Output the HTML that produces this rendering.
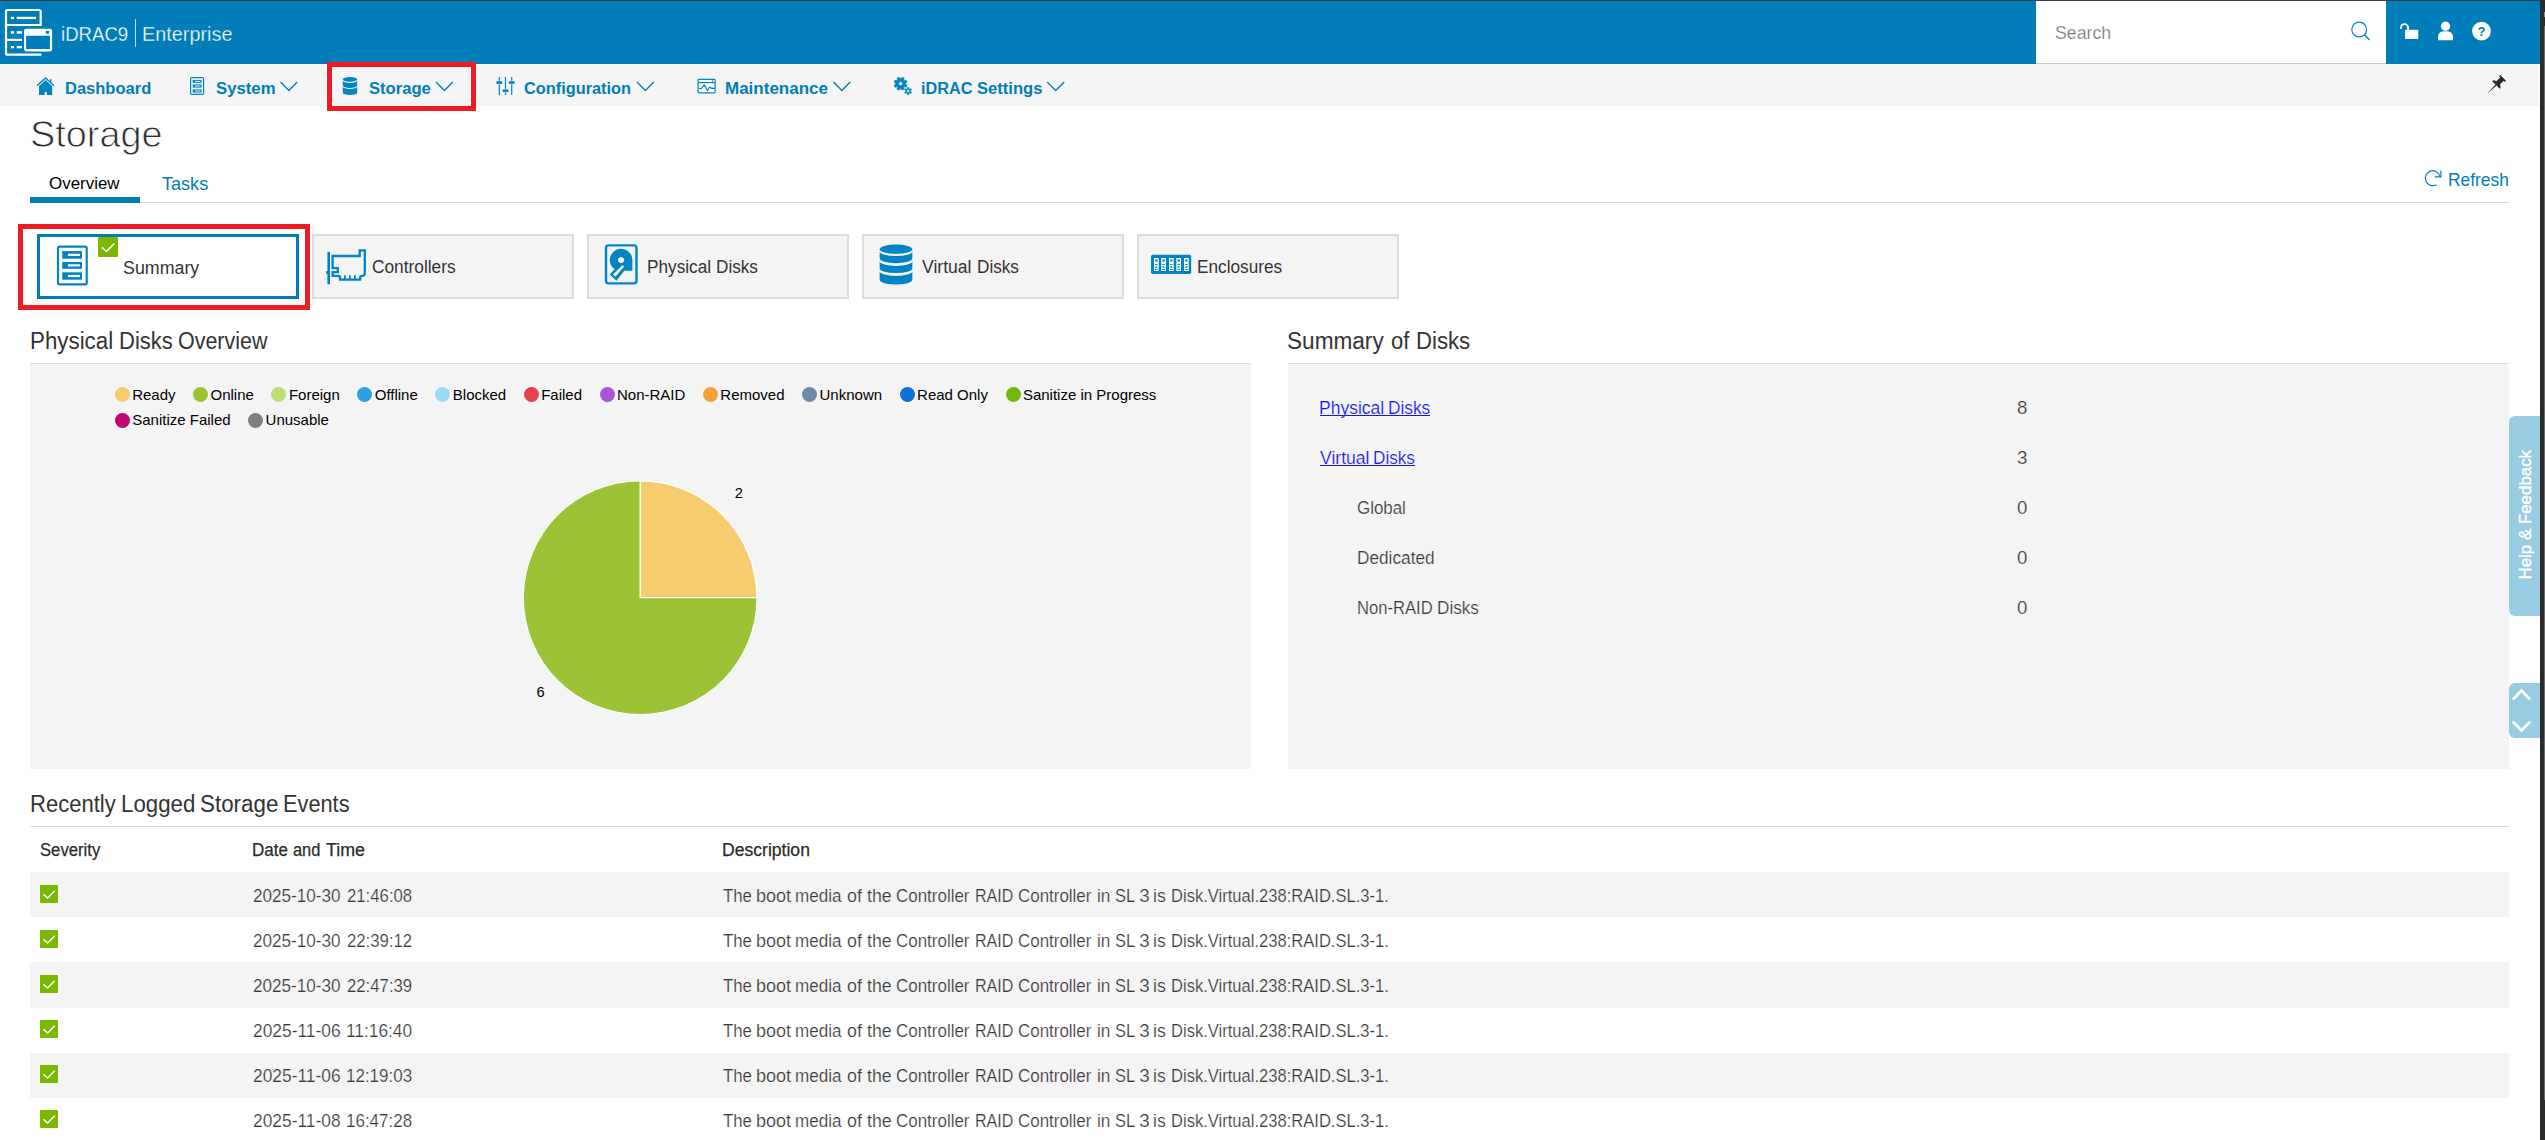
<!DOCTYPE html>
<html lang="en"><head><meta charset="utf-8"><title>iDRAC9 - Storage</title>
<style>
html,body{margin:0;padding:0;}
body{width:2545px;height:1140px;overflow:hidden;background:#fff;position:relative;font-family:"Liberation Sans",sans-serif;}
.b{position:absolute;box-sizing:content-box;display:block;}
.t{position:absolute;white-space:nowrap;transform-origin:0 0;font-family:"Liberation Sans",sans-serif;}
.legend{position:absolute;white-space:nowrap;font-family:"Liberation Sans",sans-serif;font-size:15px;line-height:25.2px;color:#000;}
.legend .li{display:inline-block;margin-right:17.6px;}
.legend .li i{display:inline-block;width:15px;height:15px;border-radius:50%;margin-right:2.4px;vertical-align:-2.9px;}
</style></head>
<body>
<div class="b" style="left:0px;top:0px;width:2545px;height:1px;background:#3c3c3c;"></div>
<div class="b" style="left:0px;top:1px;width:2540px;height:63px;background:#007db8;"></div>
<div class="b" style="left:2036px;top:1px;width:350px;height:62px;background:#ffffff;"></div>
<div class="b" style="left:2036px;top:63px;width:350px;height:1px;background:#c8c8c8;"></div>
<div class="b" style="left:0px;top:64px;width:2539px;height:42px;background:#f5f5f5;"></div>
<div class="b" style="left:2540px;top:0px;width:5px;height:1140px;background:#2b2b2b;"></div>
<div class="b" style="left:2543.5px;top:26px;width:1.5px;height:1074px;background:#6a6a6a;"></div>
<div class="b" style="left:2543.6px;top:12px;width:1.4px;height:5px;background:#8a8a8a;"></div>
<svg class="b" style="left:0px;top:4px;" width="60" height="56" viewBox="0 4 60 56"><g fill="none" stroke="#fff" stroke-width="2.2" stroke-linejoin="round" stroke-linecap="butt">
<path d="M6 25 H40.7 V11.5 a1.5 1.5 0 0 0 -1.5 -1.5 H7.5 a1.5 1.5 0 0 0 -1.5 1.5 V53.2 a1.5 1.5 0 0 0 1.5 1.5 H41.3"/>
<path d="M6 39.9 H22"/>
</g>
<g fill="#fff">
<rect x="10.8" y="16.8" width="3.2" height="2.3"/><rect x="16.7" y="16.8" width="19.4" height="2.3"/>
<rect x="10.8" y="31.2" width="3.2" height="2.5"/><rect x="16.7" y="31.2" width="5.3" height="2.5"/>
<rect x="10.8" y="46" width="3.2" height="2.3"/><rect x="16.7" y="46" width="5.3" height="2.3"/>
<path d="M24.1 30.6 a1.8 1.8 0 0 1 1.8 -1.8 h24.4 a1.8 1.8 0 0 1 1.8 1.8 v19 a1.8 1.8 0 0 1 -1.8 1.8 h-24.4 a1.8 1.8 0 0 1 -1.8 -1.8Z M26.1 35.8 v13.2 h23.8 v-13.2Z M45.9 31 v2.7 h3.2 v-2.7Z" fill-rule="evenodd"/>
</g></svg>
<div class="b" style="left:135px;top:19px;width:1.2px;height:28px;background:rgba(255,255,255,0.75);"></div>
<svg class="b" style="left:2348px;top:18px;" width="26" height="26" viewBox="2348 18 26 26"><circle cx="2359.2" cy="29.5" r="7.4" fill="none" stroke="#0085c3" stroke-width="1.15"/><path d="M2364.4 34.8 L2369.6 40" stroke="#0085c3" stroke-width="1.4" fill="none"/></svg>
<svg class="b" style="left:2396px;top:18px;" width="26" height="26" viewBox="2396 18 26 26"><rect x="2405.1" y="29.8" width="13.2" height="9.2" fill="#fff"/><path d="M2400.9 29 v-1.2 a3.6 3.6 0 0 1 7.2 0 v2.5" fill="none" stroke="#fff" stroke-width="1.8"/></svg>
<svg class="b" style="left:2434px;top:18px;" width="24" height="26" viewBox="2434 18 24 26"><circle cx="2445.5" cy="26.2" r="4.6" fill="#fff"/><path d="M2438 40.2 v-3.4 a5.6 5.6 0 0 1 5.6 -5.6 h3.8 a5.6 5.6 0 0 1 5.6 5.6 v3.4Z" fill="#fff"/></svg>
<svg class="b" style="left:2470px;top:20px;" width="24" height="24" viewBox="2470 20 24 24"><circle cx="2481.5" cy="31.1" r="9.4" fill="#fff"/></svg>
<div class="t" style="left:2477.6px;top:22.9px;font-size:13px;line-height:17px;font-weight:700;color:#007db8">?</div>
<svg class="b" style="left:34px;top:74px;" width="24" height="24" viewBox="34 74 24 24"><path d="M37 85.7 L45.5 77.9 L54 85.7" fill="none" stroke="#0085c3" stroke-width="1.4" stroke-linecap="butt"/><rect x="50.1" y="79" width="1.3" height="3.6" fill="#0085c3"/><path d="M45.5 80.1 L52.2 86.2 V95 H46.8 V92 H44.7 V95 H39 V86.2Z" fill="#0085c3"/></svg>
<svg class="b" style="left:188px;top:75px;" width="20" height="22" viewBox="188 75 20 22"><rect x="190.6" y="77.6" width="13" height="16.8" rx="1.2" fill="none" stroke="#0085c3" stroke-width="1.2"/><rect x="192.7" y="79.9" width="8.9" height="3.0" fill="#0085c3"/><rect x="195" y="80.9" width="5.4" height="1" fill="#e8f3fa"/><rect x="192.7" y="84.4" width="8.9" height="3.2" fill="#0085c3"/><rect x="195" y="85.5" width="5.4" height="1" fill="#e8f3fa"/><rect x="192.7" y="89.4" width="8.9" height="3.2" fill="#0085c3"/><rect x="195" y="90.5" width="5.4" height="1" fill="#e8f3fa"/></svg>
<svg class="b" style="left:340px;top:75px;" width="20" height="22" viewBox="340 75 20 22"><ellipse cx="350" cy="79.35" rx="7.2" ry="2.35" fill="#0085c3"/><path d="M342.8 80.6 A7.2 2.35 0 0 0 357.2 80.6 L357.2 85.55 A7.2 2.35 0 0 1 342.8 85.55Z" fill="#0085c3"/><path d="M342.8 86.6 A7.2 2.35 0 0 0 357.2 86.6 L357.2 92.65 A7.2 2.35 0 0 1 342.8 92.65Z" fill="#0085c3"/></svg>
<svg class="b" style="left:494px;top:75px;" width="24" height="22" viewBox="494 75 24 22"><rect x="498.7" y="77" width="1.2" height="18" fill="#0085c3"/><rect x="496.0" y="80.7" width="6.6" height="3.7" fill="#f5f5f5"/><rect x="496.40000000000003" y="81.2" width="5.8" height="2.7" fill="#0085c3"/><rect x="504.9" y="77" width="1.2" height="18" fill="#0085c3"/><rect x="502.2" y="88.9" width="6.6" height="3.7" fill="#f5f5f5"/><rect x="502.6" y="89.4" width="5.8" height="2.7" fill="#0085c3"/><rect x="511.09999999999997" y="77" width="1.2" height="18" fill="#0085c3"/><rect x="508.4" y="80.7" width="6.6" height="3.7" fill="#f5f5f5"/><rect x="508.8" y="81.2" width="5.8" height="2.7" fill="#0085c3"/></svg>
<svg class="b" style="left:695px;top:76px;" width="24" height="20" viewBox="695 76 24 20"><rect x="698.1" y="79.4" width="17" height="13.5" rx="0.8" fill="#fff" stroke="#0085c3" stroke-width="1.2"/><rect x="712.2" y="80" width="0.7" height="2.2" fill="#0085c3"/><path d="M698.1 82.6 H715.1" stroke="#0085c3" stroke-width="1.2"/><path d="M698.6 88.5 H701.6 L704.3 84.9 L707.4 90.5 L709.8 87.1 L711.8 88.4 H714.8" fill="none" stroke="#0085c3" stroke-width="1.2" stroke-linejoin="round"/></svg>
<svg class="b" style="left:890px;top:74px;" width="26" height="24" viewBox="890 74 26 24"><path d="M905.18 84.17 L906.98 84.97 L906.00 87.31 L904.17 86.60 L903.50 87.27 L904.21 89.10 L901.87 90.08 L901.07 88.28 L900.13 88.28 L899.33 90.08 L896.99 89.10 L897.70 87.27 L897.03 86.60 L895.20 87.31 L894.22 84.97 L896.02 84.17 L896.02 83.23 L894.22 82.43 L895.20 80.09 L897.03 80.80 L897.70 80.13 L896.99 78.30 L899.33 77.32 L900.13 79.12 L901.07 79.12 L901.87 77.32 L904.21 78.30 L903.50 80.13 L904.17 80.80 L906.00 80.09 L906.98 82.43 L905.18 83.23Z M898.50 83.70 a2.1 2.1 0 1 0 4.2 0 a2.1 2.1 0 1 0 -4.2 0Z" fill="#0085c3" fill-rule="evenodd" stroke="#0085c3" stroke-width="0.8" stroke-linejoin="round"/><path d="M908.91 93.31 L908.91 94.66 L907.29 94.66 L907.29 93.31 L906.55 92.88 L905.38 93.55 L904.57 92.16 L905.74 91.48 L905.74 90.62 L904.57 89.94 L905.38 88.55 L906.55 89.22 L907.29 88.79 L907.29 87.44 L908.91 87.44 L908.91 88.79 L909.65 89.22 L910.82 88.55 L911.63 89.94 L910.46 90.62 L910.46 91.48 L911.63 92.16 L910.82 93.55 L909.65 92.88Z M906.75 91.05 a1.35 1.35 0 1 0 2.7 0 a1.35 1.35 0 1 0 -2.7 0Z" fill="#0085c3" fill-rule="evenodd" stroke="#0085c3" stroke-width="0.5" stroke-linejoin="round"/></svg>
<svg class="b" style="left:278px;top:80px;" width="22" height="14" viewBox="278 80 22 14"><path d="M280.6 82 L288.9 90.5 L297.2 82" fill="none" stroke="#007db8" stroke-width="1.3"/></svg>
<svg class="b" style="left:434px;top:80px;" width="22" height="14" viewBox="434 80 22 14"><path d="M436 82 L444.4 90.5 L452.8 82" fill="none" stroke="#007db8" stroke-width="1.3"/></svg>
<svg class="b" style="left:635px;top:80px;" width="22" height="14" viewBox="635 80 22 14"><path d="M637 82 L645.4 90.5 L653.8 82" fill="none" stroke="#007db8" stroke-width="1.3"/></svg>
<svg class="b" style="left:831px;top:80px;" width="22" height="14" viewBox="831 80 22 14"><path d="M833.5 82 L841.85 90.5 L850.2 82" fill="none" stroke="#007db8" stroke-width="1.3"/></svg>
<svg class="b" style="left:1045px;top:80px;" width="23" height="14" viewBox="1045 80 23 14"><path d="M1047.2 82 L1055.7 90.5 L1064.2 82" fill="none" stroke="#007db8" stroke-width="1.3"/></svg>
<svg class="b" style="left:2484px;top:72px;" width="26" height="26" viewBox="2484 72 26 26"><path d="M2487.00 94.00 L2496.51 85.52 L2499.74 88.76 L2500.64 87.86 L2500.08 84.30 L2503.68 80.70 L2504.86 81.88 L2506.06 80.68 L2500.32 74.94 L2499.12 76.14 L2500.30 77.32 L2496.70 80.92 L2493.14 80.36 L2492.24 81.26 L2495.48 84.49Z" fill="#2b2b2b"/></svg>
<div class="b" style="left:327px;top:62px;width:139px;height:39px;background:transparent;border:5px solid #ed1c24;"></div>
<div class="b" style="left:18px;top:224px;width:282px;height:76px;background:transparent;border:5px solid #ed1c24;"></div>
<div class="b" style="left:30px;top:197px;width:110px;height:6px;background:#007db8;"></div>
<div class="b" style="left:140px;top:202px;width:2369px;height:1px;background:#dcdcdc;"></div>
<svg class="b" style="left:2422px;top:167px;" width="22" height="22" viewBox="2422 167 22 22"><path d="M2440.1 176.6 A7.5 7.5 0 1 0 2436.5 184.7" fill="none" stroke="#0085c3" stroke-width="1.2"/><path d="M2434.8 176.9 H2440.9 V170.6" fill="none" stroke="#0085c3" stroke-width="1.2"/></svg>
<div class="b" style="left:37px;top:234px;width:256px;height:59px;background:#ffffff;border:3px solid #007db8;"></div>
<div class="b" style="left:312px;top:234px;width:258px;height:61px;background:#f4f4f4;border:2px solid #dcdcdc;"></div>
<div class="b" style="left:587px;top:234px;width:258px;height:61px;background:#f4f4f4;border:2px solid #dcdcdc;"></div>
<div class="b" style="left:862px;top:234px;width:258px;height:61px;background:#f4f4f4;border:2px solid #dcdcdc;"></div>
<div class="b" style="left:1137px;top:234px;width:258px;height:61px;background:#f4f4f4;border:2px solid #dcdcdc;"></div>
<svg class="b" style="left:54px;top:243px;" width="36" height="45" viewBox="54 243 36 45"><rect x="58" y="246.7" width="28.7" height="37.6" rx="1.6" fill="#fff" stroke="#0085c3" stroke-width="2.2"/><rect x="62.2" y="251.1" width="19.8" height="7.6" fill="#0085c3"/><rect x="67.9" y="253.8" width="12.1" height="2.2" fill="#fff"/><rect x="62.2" y="262" width="19.8" height="6.8" fill="#0085c3"/><rect x="67.9" y="264.29999999999995" width="12.1" height="2.2" fill="#fff"/><rect x="62.2" y="272.3" width="19.8" height="7.4" fill="#0085c3"/><rect x="67.9" y="274.9" width="12.1" height="2.2" fill="#fff"/></svg>
<svg class="b" style="left:98px;top:237px;" width="20" height="20" viewBox="98 237 20 20"><rect x="98" y="237" width="20" height="20" rx="1.2" fill="#7ab800"/><path d="M101.9 247.4 L106.5 251.4 L114.4 243.5" fill="none" stroke="#fff" stroke-width="1.6"/></svg>
<svg class="b" style="left:324px;top:247px;" width="44" height="40" viewBox="324 247 44 40"><rect x="327.4" y="252" width="2.6" height="32.3" fill="#0085c3"/><rect x="326.2" y="271" width="2" height="3" fill="#0085c3"/>
<path d="M332.6 256 H359.7 V250.4 H364.8 V273.6 a2.2 2.2 0 0 1 -2.2 2.2 H361.6 a1.4 1.4 0 0 0 -1.4 1.4 V279.7 H340 V277.4 a1.6 1.6 0 0 0 -1.6 -1.6 H332.6 V272.2 H337.8 V268.1 H332.6Z" fill="none" stroke="#0085c3" stroke-width="2.3" stroke-linejoin="miter"/>
<path d="M344.9 275.2 V279.7 M349.9 275.2 V279.7 M354.9 275.2 V279.7" stroke="#0085c3" stroke-width="1.8"/></svg>
<svg class="b" style="left:603px;top:242px;" width="37" height="45" viewBox="603 242 37 45"><rect x="606" y="245.4" width="30.5" height="38" rx="2.6" fill="none" stroke="#0085c3" stroke-width="2.4"/>
<path d="M624.2 270.7 H632.4 V260 A11.3 11.3 0 1 0 614.6 269.3 L609.7 274.4 L616.5 280.7Z M621.1 256.9 a3.1 3.1 0 1 0 0.01 0Z" fill="#0085c3" fill-rule="evenodd"/>
<path d="M612.9 274.5 L622.6 265.1 L624 266.7 L615.4 276.8Z" fill="#f4f4f4"/></svg>
<svg class="b" style="left:877px;top:242px;" width="38" height="45" viewBox="877 242 38 45"><ellipse cx="896" cy="249.2" rx="16.35" ry="4.7" fill="#0085c3"/><path d="M879.65 251.4 A16.35 4.7 0 0 0 912.35 251.4 L912.35 258.5 A16.35 4.7 0 0 1 879.65 258.5Z" fill="#0085c3"/><path d="M879.65 261.3 A16.35 4.7 0 0 0 912.35 261.3 L912.35 268.4 A16.35 4.7 0 0 1 879.65 268.4Z" fill="#0085c3"/><path d="M879.65 271.3 A16.35 4.7 0 0 0 912.35 271.3 L912.35 279.6 A16.35 5.0 0 0 1 879.65 279.6Z" fill="#0085c3"/></svg>
<svg class="b" style="left:1149px;top:252px;" width="44" height="24" viewBox="1149 252 44 24"><rect x="1151" y="254.8" width="40.2" height="19.2" rx="1.8" fill="#0085c3"/><rect x="1154" y="258" width="4.7" height="13" fill="#fff"/><rect x="1155.2" y="259.4" width="2.3" height="2.2" fill="#0085c3"/><rect x="1155" y="264" width="2.7" height="0.9" fill="#0085c3"/><rect x="1155.2" y="266" width="2.3" height="2" fill="#5aa5d4"/><rect x="1155" y="269" width="2.7" height="0.9" fill="#0085c3"/><rect x="1161.2" y="258" width="4.7" height="13" fill="#fff"/><rect x="1162.4" y="259.4" width="2.3" height="2.2" fill="#0085c3"/><rect x="1162.2" y="264" width="2.7" height="0.9" fill="#0085c3"/><rect x="1162.4" y="266" width="2.3" height="2" fill="#5aa5d4"/><rect x="1162.2" y="269" width="2.7" height="0.9" fill="#0085c3"/><rect x="1169" y="258" width="4.7" height="13" fill="#fff"/><rect x="1170.2" y="259.4" width="2.3" height="2.2" fill="#0085c3"/><rect x="1170" y="264" width="2.7" height="0.9" fill="#0085c3"/><rect x="1170.2" y="266" width="2.3" height="2" fill="#5aa5d4"/><rect x="1170" y="269" width="2.7" height="0.9" fill="#0085c3"/><rect x="1176.3" y="258" width="4.7" height="13" fill="#fff"/><rect x="1177.5" y="259.4" width="2.3" height="2.2" fill="#0085c3"/><rect x="1177.3" y="264" width="2.7" height="0.9" fill="#0085c3"/><rect x="1177.5" y="266" width="2.3" height="2" fill="#5aa5d4"/><rect x="1177.3" y="269" width="2.7" height="0.9" fill="#0085c3"/><rect x="1184" y="258" width="4.7" height="13" fill="#fff"/><rect x="1185.2" y="259.4" width="2.3" height="2.2" fill="#0085c3"/><rect x="1185" y="264" width="2.7" height="0.9" fill="#0085c3"/><rect x="1185.2" y="266" width="2.3" height="2" fill="#5aa5d4"/><rect x="1185" y="269" width="2.7" height="0.9" fill="#0085c3"/></svg>
<div class="b" style="left:30px;top:363px;width:1221px;height:1px;background:#dcdcdc;"></div>
<div class="b" style="left:30px;top:364px;width:1221px;height:405px;background:#f4f4f4;"></div>
<div class="b" style="left:1288px;top:363px;width:1221px;height:1px;background:#dcdcdc;"></div>
<div class="b" style="left:1288px;top:364px;width:1221px;height:405px;background:#f4f4f4;"></div>
<svg class="b" style="left:520px;top:477px;" width="242" height="242" viewBox="520 477 242 242"><circle cx="640.2" cy="597.7" r="116.8" fill="#9bc335" stroke="#fff" stroke-width="1"/><path d="M640.2 597.7 V480.9 A116.8 116.8 0 0 1 757 597.7Z" fill="#f5cd6e" stroke="#fff" stroke-width="1.3"/></svg>
<div class="legend" style="left:114.8px;top:381.5px;"><span class="li"><i style="background:#f5cd6e"></i>Ready</span><span class="li"><i style="background:#9bc335"></i>Online</span><span class="li"><i style="background:#bfdc77"></i>Foreign</span><span class="li"><i style="background:#2d9fe3"></i>Offline</span><span class="li"><i style="background:#9adcf5"></i>Blocked</span><span class="li"><i style="background:#e4434e"></i>Failed</span><span class="li"><i style="background:#a855d8"></i>Non-RAID</span><span class="li"><i style="background:#f6a135"></i>Removed</span><span class="li"><i style="background:#6e8ba6"></i>Unknown</span><span class="li"><i style="background:#0b72d6"></i>Read Only</span><span class="li"><i style="background:#76b70f"></i>Sanitize in Progress</span><br><span class="li"><i style="background:#c0076f"></i>Sanitize Failed</span><span class="li"><i style="background:#7f7f7f"></i>Unusable</span></div>
<div class="b" style="left:1320px;top:415.4px;width:110.2px;height:1px;background:#1414f0;"></div>
<div class="b" style="left:1320px;top:465.1px;width:95.4px;height:1px;background:#1414f0;"></div>
<div class="b" style="left:2509px;top:416px;width:31px;height:200px;background:#99cbe3;border-radius:6px 0 0 6px;"></div>
<div class="t" style="left:2460.5px;top:504.5px;width:129px;text-align:center;font-size:16.9px;line-height:20px;color:#fff;transform-origin:50% 50%;transform:rotate(-90deg);-webkit-text-stroke:0.35px #fff;">Help &amp; Feedback</div>
<div class="b" style="left:2509px;top:683px;width:31px;height:55px;background:#99cbe3;border-radius:6px 0 0 6px;"></div>
<svg class="b" style="left:2509px;top:683px;" width="31" height="55" viewBox="2509 683 31 55"><path d="M2512.9 699.5 L2521.5 690.6 L2530.1 699.5 M2512.9 721.6 L2521.5 730.5 L2530.1 721.6" fill="none" stroke="#fff" stroke-width="2.8"/></svg>
<div class="b" style="left:30px;top:826px;width:2479px;height:1px;background:#dcdcdc;"></div>
<div class="b" style="left:30px;top:872px;width:2479px;height:45px;background:#f4f4f4;"></div>
<svg class="b" style="left:40px;top:885px;" width="18" height="18" viewBox="40 885 18 18"><rect x="40" y="885" width="18" height="18" rx="1.08" fill="#7ab800"/><path d="M43.51 894.36 L47.65 897.96 L54.76 890.85" fill="none" stroke="#fff" stroke-width="1.4400000000000002"/></svg>
<svg class="b" style="left:40px;top:930px;" width="18" height="18" viewBox="40 930 18 18"><rect x="40" y="930" width="18" height="18" rx="1.08" fill="#7ab800"/><path d="M43.51 939.36 L47.65 942.96 L54.76 935.85" fill="none" stroke="#fff" stroke-width="1.4400000000000002"/></svg>
<div class="b" style="left:30px;top:962px;width:2479px;height:46px;background:#f4f4f4;"></div>
<svg class="b" style="left:40px;top:975px;" width="18" height="18" viewBox="40 975 18 18"><rect x="40" y="975" width="18" height="18" rx="1.08" fill="#7ab800"/><path d="M43.51 984.36 L47.65 987.96 L54.76 980.85" fill="none" stroke="#fff" stroke-width="1.4400000000000002"/></svg>
<svg class="b" style="left:40px;top:1020px;" width="18" height="18" viewBox="40 1020 18 18"><rect x="40" y="1020" width="18" height="18" rx="1.08" fill="#7ab800"/><path d="M43.51 1029.36 L47.65 1032.96 L54.76 1025.85" fill="none" stroke="#fff" stroke-width="1.4400000000000002"/></svg>
<div class="b" style="left:30px;top:1053px;width:2479px;height:45px;background:#f4f4f4;"></div>
<svg class="b" style="left:40px;top:1065px;" width="18" height="18" viewBox="40 1065 18 18"><rect x="40" y="1065" width="18" height="18" rx="1.08" fill="#7ab800"/><path d="M43.51 1074.36 L47.65 1077.96 L54.76 1070.85" fill="none" stroke="#fff" stroke-width="1.4400000000000002"/></svg>
<svg class="b" style="left:40px;top:1110px;" width="18" height="18" viewBox="40 1110 18 18"><rect x="40" y="1110" width="18" height="18" rx="1.08" fill="#7ab800"/><path d="M43.51 1119.36 L47.65 1122.96 L54.76 1115.85" fill="none" stroke="#fff" stroke-width="1.4400000000000002"/></svg>
<div class="t" style="left:61.27px;top:22.03px;font-size:20px;line-height:24px;font-weight:400;color:#ffffff;transform:scaleX(0.9295);-webkit-text-stroke:0.3px #007db8;">iDRAC9</div>
<div class="t" style="left:142.21px;top:22.03px;font-size:20px;line-height:24px;font-weight:400;color:#ffffff;transform:scaleX(0.9925);-webkit-text-stroke:0.3px #007db8;">Enterprise</div>
<div class="t" style="left:2055.34px;top:22.03px;font-size:18px;line-height:22px;font-weight:400;color:#757575;transform:scaleX(0.9857);-webkit-text-stroke:0.25px #fff;">Search</div>
<div class="t" style="left:64.55px;top:78.03px;font-size:17.4px;line-height:21px;font-weight:700;color:#007db8;transform:scaleX(0.9494);">Dashboard</div>
<div class="t" style="left:216.20px;top:78.03px;font-size:17.4px;line-height:21px;font-weight:700;color:#007db8;transform:scaleX(0.9624);">System</div>
<div class="t" style="left:369.20px;top:78.03px;font-size:17.4px;line-height:21px;font-weight:700;color:#007db8;transform:scaleX(0.9552);">Storage</div>
<div class="t" style="left:524.33px;top:78.03px;font-size:17.4px;line-height:21px;font-weight:700;color:#007db8;transform:scaleX(0.9386);">Configuration</div>
<div class="t" style="left:724.92px;top:78.03px;font-size:17.4px;line-height:21px;font-weight:700;color:#007db8;transform:scaleX(0.9774);">Maintenance</div>
<div class="t" style="left:921.47px;top:78.03px;font-size:17.4px;line-height:21px;font-weight:700;color:#007db8;transform:scaleX(0.9323);">iDRAC</div>
<div class="t" style="left:977.10px;top:78.03px;font-size:17.4px;line-height:21px;font-weight:700;color:#007db8;transform:scaleX(0.9524);">Settings</div>
<div class="t" style="left:29.95px;top:112.02px;font-size:37.3px;line-height:45px;font-weight:400;color:#2e2e2e;transform:scaleX(1.0147);-webkit-text-stroke:0.85px #fff;">Storage</div>
<div class="t" style="left:48.96px;top:173.03px;font-size:17.4px;line-height:21px;font-weight:400;color:#000000;transform:scaleX(0.9737);">Overview</div>
<div class="t" style="left:162.10px;top:173.02px;font-size:18.6px;line-height:22px;font-weight:400;color:#007db8;transform:scaleX(0.9718);">Tasks</div>
<div class="t" style="left:2447.77px;top:169.02px;font-size:18.6px;line-height:22px;font-weight:400;color:#007db8;transform:scaleX(0.9347);">Refresh</div>
<div class="t" style="left:123.41px;top:257.03px;font-size:18.7px;line-height:22px;font-weight:400;color:#333333;transform:scaleX(0.9534);">Summary</div>
<div class="t" style="left:372.15px;top:256.02px;font-size:18.7px;line-height:22px;font-weight:400;color:#333333;transform:scaleX(0.9255);">Controllers</div>
<div class="t" style="left:646.58px;top:256.02px;font-size:18.7px;line-height:22px;font-weight:400;color:#333333;transform:scaleX(0.9209);">Physical</div>
<div class="t" style="left:716.08px;top:256.02px;font-size:18.7px;line-height:22px;font-weight:400;color:#333333;transform:scaleX(0.9180);">Disks</div>
<div class="t" style="left:922.40px;top:256.02px;font-size:18.7px;line-height:22px;font-weight:400;color:#333333;transform:scaleX(0.9402);">Virtual</div>
<div class="t" style="left:976.58px;top:256.02px;font-size:18.7px;line-height:22px;font-weight:400;color:#333333;transform:scaleX(0.9180);">Disks</div>
<div class="t" style="left:1197.13px;top:256.02px;font-size:18.7px;line-height:22px;font-weight:400;color:#333333;transform:scaleX(0.9210);">Enclosures</div>
<div class="t" style="left:30.33px;top:327.03px;font-size:23px;line-height:28px;font-weight:400;color:#333333;transform:scaleX(0.9709);">Physical</div>
<div class="t" style="left:119.04px;top:327.03px;font-size:23px;line-height:28px;font-weight:400;color:#333333;transform:scaleX(0.9570);">Disks</div>
<div class="t" style="left:177.77px;top:327.03px;font-size:23px;line-height:28px;font-weight:400;color:#333333;transform:scaleX(0.9324);">Overview</div>
<div class="t" style="left:1287.42px;top:327.03px;font-size:23px;line-height:28px;font-weight:400;color:#333333;transform:scaleX(0.9826);">Summary</div>
<div class="t" style="left:1390.90px;top:327.03px;font-size:23px;line-height:28px;font-weight:400;color:#333333;transform:scaleX(0.9550);">of</div>
<div class="t" style="left:1415.84px;top:327.03px;font-size:23px;line-height:28px;font-weight:400;color:#333333;transform:scaleX(0.9631);">Disks</div>
<div class="t" style="left:30.04px;top:790.03px;font-size:23px;line-height:28px;font-weight:400;color:#333333;transform:scaleX(0.9570);">Recently</div>
<div class="t" style="left:121.43px;top:790.03px;font-size:23px;line-height:28px;font-weight:400;color:#333333;transform:scaleX(0.9681);">Logged</div>
<div class="t" style="left:199.73px;top:790.03px;font-size:23px;line-height:28px;font-weight:400;color:#333333;transform:scaleX(0.9725);">Storage</div>
<div class="t" style="left:283.05px;top:790.03px;font-size:23px;line-height:28px;font-weight:400;color:#333333;transform:scaleX(0.9460);">Events</div>
<div class="t" style="left:1319.06px;top:397.03px;font-size:18.7px;line-height:22px;font-weight:400;color:#1414f0;transform:scaleX(0.9372);-webkit-text-stroke:0.2px #f4f4f4;">Physical</div>
<div class="t" style="left:1388.28px;top:397.03px;font-size:18.7px;line-height:22px;font-weight:400;color:#1414f0;transform:scaleX(0.9248);-webkit-text-stroke:0.2px #f4f4f4;">Disks</div>
<div class="t" style="left:1320.00px;top:447.02px;font-size:18.7px;line-height:22px;font-weight:400;color:#1414f0;transform:scaleX(0.9402);-webkit-text-stroke:0.2px #f4f4f4;">Virtual</div>
<div class="t" style="left:1373.23px;top:447.02px;font-size:18.7px;line-height:22px;font-weight:400;color:#1414f0;transform:scaleX(0.9180);-webkit-text-stroke:0.2px #f4f4f4;">Disks</div>
<div class="t" style="left:1356.78px;top:497.02px;font-size:18.7px;line-height:22px;font-weight:400;color:#383838;transform:scaleX(0.9042);-webkit-text-stroke:0.22px #f4f4f4;">Global</div>
<div class="t" style="left:1356.58px;top:547.03px;font-size:18.7px;line-height:22px;font-weight:400;color:#383838;transform:scaleX(0.9220);-webkit-text-stroke:0.22px #f4f4f4;">Dedicated</div>
<div class="t" style="left:1356.61px;top:597.03px;font-size:18.7px;line-height:22px;font-weight:400;color:#383838;transform:scaleX(0.8893);-webkit-text-stroke:0.22px #f4f4f4;">Non-RAID</div>
<div class="t" style="left:1436.58px;top:597.03px;font-size:18.7px;line-height:22px;font-weight:400;color:#383838;transform:scaleX(0.9180);-webkit-text-stroke:0.22px #f4f4f4;">Disks</div>
<div class="t" style="left:2016.89px;top:397.03px;font-size:18.7px;line-height:22px;font-weight:400;color:#383838;letter-spacing:0.000px;-webkit-text-stroke:0.22px #f4f4f4;">8</div>
<div class="t" style="left:2016.89px;top:447.03px;font-size:18.7px;line-height:22px;font-weight:400;color:#383838;letter-spacing:0.000px;-webkit-text-stroke:0.22px #f4f4f4;">3</div>
<div class="t" style="left:2016.89px;top:497.03px;font-size:18.7px;line-height:22px;font-weight:400;color:#383838;letter-spacing:0.000px;-webkit-text-stroke:0.22px #f4f4f4;">0</div>
<div class="t" style="left:2016.89px;top:547.03px;font-size:18.7px;line-height:22px;font-weight:400;color:#383838;letter-spacing:0.000px;-webkit-text-stroke:0.22px #f4f4f4;">0</div>
<div class="t" style="left:2016.89px;top:597.03px;font-size:18.7px;line-height:22px;font-weight:400;color:#383838;letter-spacing:0.000px;-webkit-text-stroke:0.22px #f4f4f4;">0</div>
<div class="t" style="left:40.40px;top:839.02px;font-size:18.7px;line-height:22px;font-weight:400;color:#2a2a2a;transform:scaleX(0.8920);-webkit-text-stroke:0.25px #2a2a2a;">Severity</div>
<div class="t" style="left:252.29px;top:839.02px;font-size:18.7px;line-height:22px;font-weight:400;color:#2a2a2a;transform:scaleX(0.9086);-webkit-text-stroke:0.25px #2a2a2a;">Date</div>
<div class="t" style="left:292.78px;top:839.02px;font-size:18.7px;line-height:22px;font-weight:400;color:#2a2a2a;transform:scaleX(0.8770);-webkit-text-stroke:0.25px #2a2a2a;">and</div>
<div class="t" style="left:326.00px;top:839.02px;font-size:18.7px;line-height:22px;font-weight:400;color:#2a2a2a;transform:scaleX(0.9520);-webkit-text-stroke:0.25px #2a2a2a;">Time</div>
<div class="t" style="left:722.06px;top:839.02px;font-size:18.7px;line-height:22px;font-weight:400;color:#2a2a2a;transform:scaleX(0.9405);-webkit-text-stroke:0.25px #2a2a2a;">Description</div>
<div class="t" style="left:253.15px;top:885.03px;font-size:18.7px;line-height:22px;font-weight:400;color:#383838;transform:scaleX(0.9160);-webkit-text-stroke:0.22px #f4f4f4;">2025-10-30</div>
<div class="t" style="left:346.90px;top:885.03px;font-size:18.7px;line-height:22px;font-weight:400;color:#383838;transform:scaleX(0.8957);-webkit-text-stroke:0.22px #f4f4f4;">21:46:08</div>
<div class="t" style="left:723.30px;top:885.03px;font-size:18.7px;line-height:22px;font-weight:400;color:#383838;transform:scaleX(0.8991);-webkit-text-stroke:0.22px #f4f4f4;">The</div>
<div class="t" style="left:755.54px;top:885.03px;font-size:18.7px;line-height:22px;font-weight:400;color:#383838;transform:scaleX(0.9626);-webkit-text-stroke:0.22px #f4f4f4;">boot</div>
<div class="t" style="left:795.19px;top:885.03px;font-size:18.7px;line-height:22px;font-weight:400;color:#383838;transform:scaleX(0.9128);-webkit-text-stroke:0.22px #f4f4f4;">media</div>
<div class="t" style="left:847.15px;top:885.03px;font-size:18.7px;line-height:22px;font-weight:400;color:#383838;transform:scaleX(0.9580);-webkit-text-stroke:0.22px #f4f4f4;">of</div>
<div class="t" style="left:867.00px;top:885.03px;font-size:18.7px;line-height:22px;font-weight:400;color:#383838;transform:scaleX(0.9498);-webkit-text-stroke:0.22px #f4f4f4;">the</div>
<div class="t" style="left:896.33px;top:885.03px;font-size:18.7px;line-height:22px;font-weight:400;color:#383838;transform:scaleX(0.9073);-webkit-text-stroke:0.22px #f4f4f4;">Controller</div>
<div class="t" style="left:975.44px;top:885.03px;font-size:18.7px;line-height:22px;font-weight:400;color:#383838;transform:scaleX(0.8598);-webkit-text-stroke:0.22px #f4f4f4;">RAID</div>
<div class="t" style="left:1018.15px;top:885.03px;font-size:18.7px;line-height:22px;font-weight:400;color:#383838;transform:scaleX(0.9061);-webkit-text-stroke:0.22px #f4f4f4;">Controller</div>
<div class="t" style="left:1097.48px;top:885.03px;font-size:18.7px;line-height:22px;font-weight:400;color:#383838;transform:scaleX(0.9200);-webkit-text-stroke:0.22px #f4f4f4;">in</div>
<div class="t" style="left:1114.60px;top:885.03px;font-size:18.7px;line-height:22px;font-weight:400;color:#383838;transform:scaleX(0.8750);-webkit-text-stroke:0.22px #f4f4f4;">SL</div>
<div class="t" style="left:1139.15px;top:885.03px;font-size:18.7px;line-height:22px;font-weight:400;color:#383838;letter-spacing:0.000px;-webkit-text-stroke:0.22px #f4f4f4;">3</div>
<div class="t" style="left:1152.85px;top:885.03px;font-size:18.7px;line-height:22px;font-weight:400;color:#383838;transform:scaleX(0.9464);-webkit-text-stroke:0.22px #f4f4f4;">is</div>
<div class="t" style="left:1170.81px;top:885.03px;font-size:18.7px;line-height:22px;font-weight:400;color:#383838;transform:scaleX(0.8862);-webkit-text-stroke:0.22px #f4f4f4;">Disk.Virtual.238:RAID.SL.3-1.</div>
<div class="t" style="left:253.15px;top:930.03px;font-size:18.7px;line-height:22px;font-weight:400;color:#383838;transform:scaleX(0.9160);-webkit-text-stroke:0.22px #fff;">2025-10-30</div>
<div class="t" style="left:346.90px;top:930.03px;font-size:18.7px;line-height:22px;font-weight:400;color:#383838;transform:scaleX(0.8957);-webkit-text-stroke:0.22px #fff;">22:39:12</div>
<div class="t" style="left:723.30px;top:930.03px;font-size:18.7px;line-height:22px;font-weight:400;color:#383838;transform:scaleX(0.8991);-webkit-text-stroke:0.22px #fff;">The</div>
<div class="t" style="left:755.54px;top:930.03px;font-size:18.7px;line-height:22px;font-weight:400;color:#383838;transform:scaleX(0.9626);-webkit-text-stroke:0.22px #fff;">boot</div>
<div class="t" style="left:795.19px;top:930.03px;font-size:18.7px;line-height:22px;font-weight:400;color:#383838;transform:scaleX(0.9128);-webkit-text-stroke:0.22px #fff;">media</div>
<div class="t" style="left:847.15px;top:930.03px;font-size:18.7px;line-height:22px;font-weight:400;color:#383838;transform:scaleX(0.9580);-webkit-text-stroke:0.22px #fff;">of</div>
<div class="t" style="left:867.00px;top:930.03px;font-size:18.7px;line-height:22px;font-weight:400;color:#383838;transform:scaleX(0.9498);-webkit-text-stroke:0.22px #fff;">the</div>
<div class="t" style="left:896.33px;top:930.03px;font-size:18.7px;line-height:22px;font-weight:400;color:#383838;transform:scaleX(0.9073);-webkit-text-stroke:0.22px #fff;">Controller</div>
<div class="t" style="left:975.44px;top:930.03px;font-size:18.7px;line-height:22px;font-weight:400;color:#383838;transform:scaleX(0.8598);-webkit-text-stroke:0.22px #fff;">RAID</div>
<div class="t" style="left:1018.15px;top:930.03px;font-size:18.7px;line-height:22px;font-weight:400;color:#383838;transform:scaleX(0.9061);-webkit-text-stroke:0.22px #fff;">Controller</div>
<div class="t" style="left:1097.48px;top:930.03px;font-size:18.7px;line-height:22px;font-weight:400;color:#383838;transform:scaleX(0.9200);-webkit-text-stroke:0.22px #fff;">in</div>
<div class="t" style="left:1114.60px;top:930.03px;font-size:18.7px;line-height:22px;font-weight:400;color:#383838;transform:scaleX(0.8750);-webkit-text-stroke:0.22px #fff;">SL</div>
<div class="t" style="left:1139.15px;top:930.03px;font-size:18.7px;line-height:22px;font-weight:400;color:#383838;letter-spacing:0.000px;-webkit-text-stroke:0.22px #fff;">3</div>
<div class="t" style="left:1152.85px;top:930.03px;font-size:18.7px;line-height:22px;font-weight:400;color:#383838;transform:scaleX(0.9464);-webkit-text-stroke:0.22px #fff;">is</div>
<div class="t" style="left:1170.81px;top:930.03px;font-size:18.7px;line-height:22px;font-weight:400;color:#383838;transform:scaleX(0.8862);-webkit-text-stroke:0.22px #fff;">Disk.Virtual.238:RAID.SL.3-1.</div>
<div class="t" style="left:253.15px;top:975.03px;font-size:18.7px;line-height:22px;font-weight:400;color:#383838;transform:scaleX(0.9160);-webkit-text-stroke:0.22px #f4f4f4;">2025-10-30</div>
<div class="t" style="left:346.90px;top:975.03px;font-size:18.7px;line-height:22px;font-weight:400;color:#383838;transform:scaleX(0.8957);-webkit-text-stroke:0.22px #f4f4f4;">22:47:39</div>
<div class="t" style="left:723.30px;top:975.03px;font-size:18.7px;line-height:22px;font-weight:400;color:#383838;transform:scaleX(0.8991);-webkit-text-stroke:0.22px #f4f4f4;">The</div>
<div class="t" style="left:755.54px;top:975.03px;font-size:18.7px;line-height:22px;font-weight:400;color:#383838;transform:scaleX(0.9626);-webkit-text-stroke:0.22px #f4f4f4;">boot</div>
<div class="t" style="left:795.19px;top:975.03px;font-size:18.7px;line-height:22px;font-weight:400;color:#383838;transform:scaleX(0.9128);-webkit-text-stroke:0.22px #f4f4f4;">media</div>
<div class="t" style="left:847.15px;top:975.03px;font-size:18.7px;line-height:22px;font-weight:400;color:#383838;transform:scaleX(0.9580);-webkit-text-stroke:0.22px #f4f4f4;">of</div>
<div class="t" style="left:867.00px;top:975.03px;font-size:18.7px;line-height:22px;font-weight:400;color:#383838;transform:scaleX(0.9498);-webkit-text-stroke:0.22px #f4f4f4;">the</div>
<div class="t" style="left:896.33px;top:975.03px;font-size:18.7px;line-height:22px;font-weight:400;color:#383838;transform:scaleX(0.9073);-webkit-text-stroke:0.22px #f4f4f4;">Controller</div>
<div class="t" style="left:975.44px;top:975.03px;font-size:18.7px;line-height:22px;font-weight:400;color:#383838;transform:scaleX(0.8598);-webkit-text-stroke:0.22px #f4f4f4;">RAID</div>
<div class="t" style="left:1018.15px;top:975.03px;font-size:18.7px;line-height:22px;font-weight:400;color:#383838;transform:scaleX(0.9061);-webkit-text-stroke:0.22px #f4f4f4;">Controller</div>
<div class="t" style="left:1097.48px;top:975.03px;font-size:18.7px;line-height:22px;font-weight:400;color:#383838;transform:scaleX(0.9200);-webkit-text-stroke:0.22px #f4f4f4;">in</div>
<div class="t" style="left:1114.60px;top:975.03px;font-size:18.7px;line-height:22px;font-weight:400;color:#383838;transform:scaleX(0.8750);-webkit-text-stroke:0.22px #f4f4f4;">SL</div>
<div class="t" style="left:1139.15px;top:975.03px;font-size:18.7px;line-height:22px;font-weight:400;color:#383838;letter-spacing:0.000px;-webkit-text-stroke:0.22px #f4f4f4;">3</div>
<div class="t" style="left:1152.85px;top:975.03px;font-size:18.7px;line-height:22px;font-weight:400;color:#383838;transform:scaleX(0.9464);-webkit-text-stroke:0.22px #f4f4f4;">is</div>
<div class="t" style="left:1170.81px;top:975.03px;font-size:18.7px;line-height:22px;font-weight:400;color:#383838;transform:scaleX(0.8862);-webkit-text-stroke:0.22px #f4f4f4;">Disk.Virtual.238:RAID.SL.3-1.</div>
<div class="t" style="left:253.15px;top:1020.03px;font-size:18.7px;line-height:22px;font-weight:400;color:#383838;transform:scaleX(0.9295);-webkit-text-stroke:0.22px #fff;">2025-11-06</div>
<div class="t" style="left:345.97px;top:1020.03px;font-size:18.7px;line-height:22px;font-weight:400;color:#383838;transform:scaleX(0.9262);-webkit-text-stroke:0.22px #fff;">11:16:40</div>
<div class="t" style="left:723.30px;top:1020.03px;font-size:18.7px;line-height:22px;font-weight:400;color:#383838;transform:scaleX(0.8991);-webkit-text-stroke:0.22px #fff;">The</div>
<div class="t" style="left:755.54px;top:1020.03px;font-size:18.7px;line-height:22px;font-weight:400;color:#383838;transform:scaleX(0.9626);-webkit-text-stroke:0.22px #fff;">boot</div>
<div class="t" style="left:795.19px;top:1020.03px;font-size:18.7px;line-height:22px;font-weight:400;color:#383838;transform:scaleX(0.9128);-webkit-text-stroke:0.22px #fff;">media</div>
<div class="t" style="left:847.15px;top:1020.03px;font-size:18.7px;line-height:22px;font-weight:400;color:#383838;transform:scaleX(0.9580);-webkit-text-stroke:0.22px #fff;">of</div>
<div class="t" style="left:867.00px;top:1020.03px;font-size:18.7px;line-height:22px;font-weight:400;color:#383838;transform:scaleX(0.9498);-webkit-text-stroke:0.22px #fff;">the</div>
<div class="t" style="left:896.33px;top:1020.03px;font-size:18.7px;line-height:22px;font-weight:400;color:#383838;transform:scaleX(0.9073);-webkit-text-stroke:0.22px #fff;">Controller</div>
<div class="t" style="left:975.44px;top:1020.03px;font-size:18.7px;line-height:22px;font-weight:400;color:#383838;transform:scaleX(0.8598);-webkit-text-stroke:0.22px #fff;">RAID</div>
<div class="t" style="left:1018.15px;top:1020.03px;font-size:18.7px;line-height:22px;font-weight:400;color:#383838;transform:scaleX(0.9061);-webkit-text-stroke:0.22px #fff;">Controller</div>
<div class="t" style="left:1097.48px;top:1020.03px;font-size:18.7px;line-height:22px;font-weight:400;color:#383838;transform:scaleX(0.9200);-webkit-text-stroke:0.22px #fff;">in</div>
<div class="t" style="left:1114.60px;top:1020.03px;font-size:18.7px;line-height:22px;font-weight:400;color:#383838;transform:scaleX(0.8750);-webkit-text-stroke:0.22px #fff;">SL</div>
<div class="t" style="left:1139.15px;top:1020.03px;font-size:18.7px;line-height:22px;font-weight:400;color:#383838;letter-spacing:0.000px;-webkit-text-stroke:0.22px #fff;">3</div>
<div class="t" style="left:1152.85px;top:1020.03px;font-size:18.7px;line-height:22px;font-weight:400;color:#383838;transform:scaleX(0.9464);-webkit-text-stroke:0.22px #fff;">is</div>
<div class="t" style="left:1170.81px;top:1020.03px;font-size:18.7px;line-height:22px;font-weight:400;color:#383838;transform:scaleX(0.8862);-webkit-text-stroke:0.22px #fff;">Disk.Virtual.238:RAID.SL.3-1.</div>
<div class="t" style="left:253.15px;top:1065.03px;font-size:18.7px;line-height:22px;font-weight:400;color:#383838;transform:scaleX(0.9295);-webkit-text-stroke:0.22px #f4f4f4;">2025-11-06</div>
<div class="t" style="left:345.99px;top:1065.03px;font-size:18.7px;line-height:22px;font-weight:400;color:#383838;transform:scaleX(0.9082);-webkit-text-stroke:0.22px #f4f4f4;">12:19:03</div>
<div class="t" style="left:723.30px;top:1065.03px;font-size:18.7px;line-height:22px;font-weight:400;color:#383838;transform:scaleX(0.8991);-webkit-text-stroke:0.22px #f4f4f4;">The</div>
<div class="t" style="left:755.54px;top:1065.03px;font-size:18.7px;line-height:22px;font-weight:400;color:#383838;transform:scaleX(0.9626);-webkit-text-stroke:0.22px #f4f4f4;">boot</div>
<div class="t" style="left:795.19px;top:1065.03px;font-size:18.7px;line-height:22px;font-weight:400;color:#383838;transform:scaleX(0.9128);-webkit-text-stroke:0.22px #f4f4f4;">media</div>
<div class="t" style="left:847.15px;top:1065.03px;font-size:18.7px;line-height:22px;font-weight:400;color:#383838;transform:scaleX(0.9580);-webkit-text-stroke:0.22px #f4f4f4;">of</div>
<div class="t" style="left:867.00px;top:1065.03px;font-size:18.7px;line-height:22px;font-weight:400;color:#383838;transform:scaleX(0.9498);-webkit-text-stroke:0.22px #f4f4f4;">the</div>
<div class="t" style="left:896.33px;top:1065.03px;font-size:18.7px;line-height:22px;font-weight:400;color:#383838;transform:scaleX(0.9073);-webkit-text-stroke:0.22px #f4f4f4;">Controller</div>
<div class="t" style="left:975.44px;top:1065.03px;font-size:18.7px;line-height:22px;font-weight:400;color:#383838;transform:scaleX(0.8598);-webkit-text-stroke:0.22px #f4f4f4;">RAID</div>
<div class="t" style="left:1018.15px;top:1065.03px;font-size:18.7px;line-height:22px;font-weight:400;color:#383838;transform:scaleX(0.9061);-webkit-text-stroke:0.22px #f4f4f4;">Controller</div>
<div class="t" style="left:1097.48px;top:1065.03px;font-size:18.7px;line-height:22px;font-weight:400;color:#383838;transform:scaleX(0.9200);-webkit-text-stroke:0.22px #f4f4f4;">in</div>
<div class="t" style="left:1114.60px;top:1065.03px;font-size:18.7px;line-height:22px;font-weight:400;color:#383838;transform:scaleX(0.8750);-webkit-text-stroke:0.22px #f4f4f4;">SL</div>
<div class="t" style="left:1139.15px;top:1065.03px;font-size:18.7px;line-height:22px;font-weight:400;color:#383838;letter-spacing:0.000px;-webkit-text-stroke:0.22px #f4f4f4;">3</div>
<div class="t" style="left:1152.85px;top:1065.03px;font-size:18.7px;line-height:22px;font-weight:400;color:#383838;transform:scaleX(0.9464);-webkit-text-stroke:0.22px #f4f4f4;">is</div>
<div class="t" style="left:1170.81px;top:1065.03px;font-size:18.7px;line-height:22px;font-weight:400;color:#383838;transform:scaleX(0.8862);-webkit-text-stroke:0.22px #f4f4f4;">Disk.Virtual.238:RAID.SL.3-1.</div>
<div class="t" style="left:253.15px;top:1110.03px;font-size:18.7px;line-height:22px;font-weight:400;color:#383838;transform:scaleX(0.9295);-webkit-text-stroke:0.22px #fff;">2025-11-08</div>
<div class="t" style="left:345.99px;top:1110.03px;font-size:18.7px;line-height:22px;font-weight:400;color:#383838;transform:scaleX(0.9082);-webkit-text-stroke:0.22px #fff;">16:47:28</div>
<div class="t" style="left:723.30px;top:1110.03px;font-size:18.7px;line-height:22px;font-weight:400;color:#383838;transform:scaleX(0.8991);-webkit-text-stroke:0.22px #fff;">The</div>
<div class="t" style="left:755.54px;top:1110.03px;font-size:18.7px;line-height:22px;font-weight:400;color:#383838;transform:scaleX(0.9626);-webkit-text-stroke:0.22px #fff;">boot</div>
<div class="t" style="left:795.19px;top:1110.03px;font-size:18.7px;line-height:22px;font-weight:400;color:#383838;transform:scaleX(0.9128);-webkit-text-stroke:0.22px #fff;">media</div>
<div class="t" style="left:847.15px;top:1110.03px;font-size:18.7px;line-height:22px;font-weight:400;color:#383838;transform:scaleX(0.9580);-webkit-text-stroke:0.22px #fff;">of</div>
<div class="t" style="left:867.00px;top:1110.03px;font-size:18.7px;line-height:22px;font-weight:400;color:#383838;transform:scaleX(0.9498);-webkit-text-stroke:0.22px #fff;">the</div>
<div class="t" style="left:896.33px;top:1110.03px;font-size:18.7px;line-height:22px;font-weight:400;color:#383838;transform:scaleX(0.9073);-webkit-text-stroke:0.22px #fff;">Controller</div>
<div class="t" style="left:975.44px;top:1110.03px;font-size:18.7px;line-height:22px;font-weight:400;color:#383838;transform:scaleX(0.8598);-webkit-text-stroke:0.22px #fff;">RAID</div>
<div class="t" style="left:1018.15px;top:1110.03px;font-size:18.7px;line-height:22px;font-weight:400;color:#383838;transform:scaleX(0.9061);-webkit-text-stroke:0.22px #fff;">Controller</div>
<div class="t" style="left:1097.48px;top:1110.03px;font-size:18.7px;line-height:22px;font-weight:400;color:#383838;transform:scaleX(0.9200);-webkit-text-stroke:0.22px #fff;">in</div>
<div class="t" style="left:1114.60px;top:1110.03px;font-size:18.7px;line-height:22px;font-weight:400;color:#383838;transform:scaleX(0.8750);-webkit-text-stroke:0.22px #fff;">SL</div>
<div class="t" style="left:1139.15px;top:1110.03px;font-size:18.7px;line-height:22px;font-weight:400;color:#383838;letter-spacing:0.000px;-webkit-text-stroke:0.22px #fff;">3</div>
<div class="t" style="left:1152.85px;top:1110.03px;font-size:18.7px;line-height:22px;font-weight:400;color:#383838;transform:scaleX(0.9464);-webkit-text-stroke:0.22px #fff;">is</div>
<div class="t" style="left:1170.81px;top:1110.03px;font-size:18.7px;line-height:22px;font-weight:400;color:#383838;transform:scaleX(0.8862);-webkit-text-stroke:0.22px #fff;">Disk.Virtual.238:RAID.SL.3-1.</div>
<div class="t" style="left:734.70px;top:484.02px;font-size:14.67px;line-height:18px;font-weight:400;color:#000;letter-spacing:0.000px;">2</div>
<div class="t" style="left:536.50px;top:683.02px;font-size:14.67px;line-height:18px;font-weight:400;color:#000;letter-spacing:0.000px;">6</div>
</body></html>
